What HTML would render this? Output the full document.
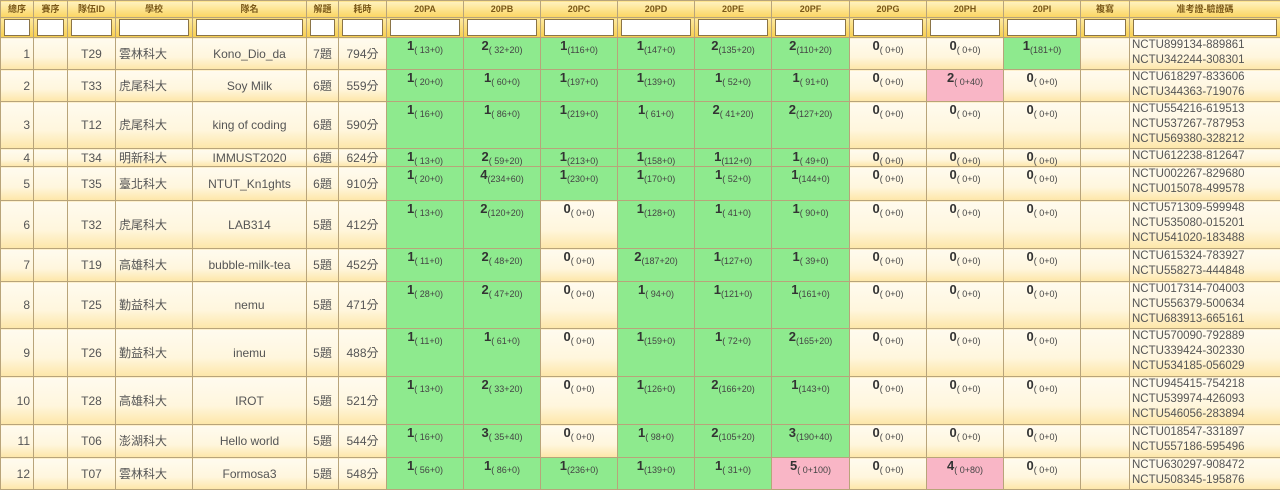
<!DOCTYPE html>
<html><head><meta charset="utf-8"><style>
*{box-sizing:border-box;margin:0;padding:0}
body{width:1280px;height:489px;overflow:hidden;background:#fff;font-family:"Liberation Sans","Noto Sans CJK TC",sans-serif}
table{border-collapse:collapse;table-layout:fixed;width:1280px}
td,th{border:1px solid #b8a47a;overflow:hidden;white-space:nowrap;line-height:14px}
th{background:linear-gradient(#fff2c0,#fbd560);font-size:9px;color:#7a5818;font-weight:bold;height:17px;text-align:center;vertical-align:middle;line-height:12px}
tr.f td{background:linear-gradient(#fde9a0,#f8cf50);height:20px;padding:1px 3px}
tr.f td div{background:#fff;border:1px solid #8a7448;height:17px}
tbody td{background:linear-gradient(#fffbef 0%,#fff6dd 60%,#fde6a8 100%);font-size:12px;color:#555;vertical-align:middle}
td.r{text-align:right;padding-right:3px}
td.c{text-align:center}
td.l{text-align:left;padding-left:3px}
td.p{text-align:center;vertical-align:top;padding-top:1px;color:#444}
td.g{background:#8eea8e}
td.k{background:#f9b6c6}
td.p b{font-size:13px;color:#333}
td.p i{font-style:normal;font-size:9px;position:relative;top:3px}
td.n{font-size:11.5px;line-height:15px;vertical-align:top;text-align:left;padding-left:2px;color:#555}
</style></head><body>
<table>
<colgroup><col style="width:33px"><col style="width:34px"><col style="width:48px"><col style="width:77px"><col style="width:114px"><col style="width:32px"><col style="width:48px"><col style="width:77px"><col style="width:77px"><col style="width:77px"><col style="width:77px"><col style="width:77px"><col style="width:78px"><col style="width:77px"><col style="width:77px"><col style="width:77px"><col style="width:49px"><col style="width:151px"></colgroup>
<thead><tr><th>總序</th><th>賽序</th><th>隊伍ID</th><th>學校</th><th>隊名</th><th>解題</th><th>耗時</th><th>20PA</th><th>20PB</th><th>20PC</th><th>20PD</th><th>20PE</th><th>20PF</th><th>20PG</th><th>20PH</th><th>20PI</th><th>複寫</th><th>准考證-驗證碼</th></tr>
<tr class="f"><td><div></div></td><td><div></div></td><td><div></div></td><td><div></div></td><td><div></div></td><td><div></div></td><td><div></div></td><td><div></div></td><td><div></div></td><td><div></div></td><td><div></div></td><td><div></div></td><td><div></div></td><td><div></div></td><td><div></div></td><td><div></div></td><td><div></div></td><td><div></div></td></tr></thead>
<tbody>
<tr style="height:32px"><td class="r">1</td><td></td><td class="c">T29</td><td class="l">雲林科大</td><td class="c">Kono_Dio_da</td><td class="c">7題</td><td class="c">794分</td><td class="p g"><b>1</b><i>( 13+0)</i></td><td class="p g"><b>2</b><i>( 32+20)</i></td><td class="p g"><b>1</b><i>(116+0)</i></td><td class="p g"><b>1</b><i>(147+0)</i></td><td class="p g"><b>2</b><i>(135+20)</i></td><td class="p g"><b>2</b><i>(110+20)</i></td><td class="p"><b>0</b><i>(  0+0)</i></td><td class="p"><b>0</b><i>(  0+0)</i></td><td class="p g"><b>1</b><i>(181+0)</i></td><td></td><td class="n">NCTU899134-889861<br>NCTU342244-308301</td></tr>
<tr style="height:32px"><td class="r">2</td><td></td><td class="c">T33</td><td class="l">虎尾科大</td><td class="c">Soy Milk</td><td class="c">6題</td><td class="c">559分</td><td class="p g"><b>1</b><i>( 20+0)</i></td><td class="p g"><b>1</b><i>( 60+0)</i></td><td class="p g"><b>1</b><i>(197+0)</i></td><td class="p g"><b>1</b><i>(139+0)</i></td><td class="p g"><b>1</b><i>( 52+0)</i></td><td class="p g"><b>1</b><i>( 91+0)</i></td><td class="p"><b>0</b><i>(  0+0)</i></td><td class="p k"><b>2</b><i>(  0+40)</i></td><td class="p"><b>0</b><i>(  0+0)</i></td><td></td><td class="n">NCTU618297-833606<br>NCTU344363-719076</td></tr>
<tr style="height:47px"><td class="r">3</td><td></td><td class="c">T12</td><td class="l">虎尾科大</td><td class="c">king of coding</td><td class="c">6題</td><td class="c">590分</td><td class="p g"><b>1</b><i>( 16+0)</i></td><td class="p g"><b>1</b><i>( 86+0)</i></td><td class="p g"><b>1</b><i>(219+0)</i></td><td class="p g"><b>1</b><i>( 61+0)</i></td><td class="p g"><b>2</b><i>( 41+20)</i></td><td class="p g"><b>2</b><i>(127+20)</i></td><td class="p"><b>0</b><i>(  0+0)</i></td><td class="p"><b>0</b><i>(  0+0)</i></td><td class="p"><b>0</b><i>(  0+0)</i></td><td></td><td class="n">NCTU554216-619513<br>NCTU537267-787953<br>NCTU569380-328212</td></tr>
<tr style="height:18px"><td class="r">4</td><td></td><td class="c">T34</td><td class="l">明新科大</td><td class="c">IMMUST2020</td><td class="c">6題</td><td class="c">624分</td><td class="p g"><b>1</b><i>( 13+0)</i></td><td class="p g"><b>2</b><i>( 59+20)</i></td><td class="p g"><b>1</b><i>(213+0)</i></td><td class="p g"><b>1</b><i>(158+0)</i></td><td class="p g"><b>1</b><i>(112+0)</i></td><td class="p g"><b>1</b><i>( 49+0)</i></td><td class="p"><b>0</b><i>(  0+0)</i></td><td class="p"><b>0</b><i>(  0+0)</i></td><td class="p"><b>0</b><i>(  0+0)</i></td><td></td><td class="n">NCTU612238-812647</td></tr>
<tr style="height:34px"><td class="r">5</td><td></td><td class="c">T35</td><td class="l">臺北科大</td><td class="c">NTUT_Kn1ghts</td><td class="c">6題</td><td class="c">910分</td><td class="p g"><b>1</b><i>( 20+0)</i></td><td class="p g"><b>4</b><i>(234+60)</i></td><td class="p g"><b>1</b><i>(230+0)</i></td><td class="p g"><b>1</b><i>(170+0)</i></td><td class="p g"><b>1</b><i>( 52+0)</i></td><td class="p g"><b>1</b><i>(144+0)</i></td><td class="p"><b>0</b><i>(  0+0)</i></td><td class="p"><b>0</b><i>(  0+0)</i></td><td class="p"><b>0</b><i>(  0+0)</i></td><td></td><td class="n">NCTU002267-829680<br>NCTU015078-499578</td></tr>
<tr style="height:48px"><td class="r">6</td><td></td><td class="c">T32</td><td class="l">虎尾科大</td><td class="c">LAB314</td><td class="c">5題</td><td class="c">412分</td><td class="p g"><b>1</b><i>( 13+0)</i></td><td class="p g"><b>2</b><i>(120+20)</i></td><td class="p"><b>0</b><i>(  0+0)</i></td><td class="p g"><b>1</b><i>(128+0)</i></td><td class="p g"><b>1</b><i>( 41+0)</i></td><td class="p g"><b>1</b><i>( 90+0)</i></td><td class="p"><b>0</b><i>(  0+0)</i></td><td class="p"><b>0</b><i>(  0+0)</i></td><td class="p"><b>0</b><i>(  0+0)</i></td><td></td><td class="n">NCTU571309-599948<br>NCTU535080-015201<br>NCTU541020-183488</td></tr>
<tr style="height:33px"><td class="r">7</td><td></td><td class="c">T19</td><td class="l">高雄科大</td><td class="c">bubble-milk-tea</td><td class="c">5題</td><td class="c">452分</td><td class="p g"><b>1</b><i>( 11+0)</i></td><td class="p g"><b>2</b><i>( 48+20)</i></td><td class="p"><b>0</b><i>(  0+0)</i></td><td class="p g"><b>2</b><i>(187+20)</i></td><td class="p g"><b>1</b><i>(127+0)</i></td><td class="p g"><b>1</b><i>( 39+0)</i></td><td class="p"><b>0</b><i>(  0+0)</i></td><td class="p"><b>0</b><i>(  0+0)</i></td><td class="p"><b>0</b><i>(  0+0)</i></td><td></td><td class="n">NCTU615324-783927<br>NCTU558273-444848</td></tr>
<tr style="height:47px"><td class="r">8</td><td></td><td class="c">T25</td><td class="l">勤益科大</td><td class="c">nemu</td><td class="c">5題</td><td class="c">471分</td><td class="p g"><b>1</b><i>( 28+0)</i></td><td class="p g"><b>2</b><i>( 47+20)</i></td><td class="p"><b>0</b><i>(  0+0)</i></td><td class="p g"><b>1</b><i>( 94+0)</i></td><td class="p g"><b>1</b><i>(121+0)</i></td><td class="p g"><b>1</b><i>(161+0)</i></td><td class="p"><b>0</b><i>(  0+0)</i></td><td class="p"><b>0</b><i>(  0+0)</i></td><td class="p"><b>0</b><i>(  0+0)</i></td><td></td><td class="n">NCTU017314-704003<br>NCTU556379-500634<br>NCTU683913-665161</td></tr>
<tr style="height:48px"><td class="r">9</td><td></td><td class="c">T26</td><td class="l">勤益科大</td><td class="c">inemu</td><td class="c">5題</td><td class="c">488分</td><td class="p g"><b>1</b><i>( 11+0)</i></td><td class="p g"><b>1</b><i>( 61+0)</i></td><td class="p"><b>0</b><i>(  0+0)</i></td><td class="p g"><b>1</b><i>(159+0)</i></td><td class="p g"><b>1</b><i>( 72+0)</i></td><td class="p g"><b>2</b><i>(165+20)</i></td><td class="p"><b>0</b><i>(  0+0)</i></td><td class="p"><b>0</b><i>(  0+0)</i></td><td class="p"><b>0</b><i>(  0+0)</i></td><td></td><td class="n">NCTU570090-792889<br>NCTU339424-302330<br>NCTU534185-056029</td></tr>
<tr style="height:48px"><td class="r">10</td><td></td><td class="c">T28</td><td class="l">高雄科大</td><td class="c">IROT</td><td class="c">5題</td><td class="c">521分</td><td class="p g"><b>1</b><i>( 13+0)</i></td><td class="p g"><b>2</b><i>( 33+20)</i></td><td class="p"><b>0</b><i>(  0+0)</i></td><td class="p g"><b>1</b><i>(126+0)</i></td><td class="p g"><b>2</b><i>(166+20)</i></td><td class="p g"><b>1</b><i>(143+0)</i></td><td class="p"><b>0</b><i>(  0+0)</i></td><td class="p"><b>0</b><i>(  0+0)</i></td><td class="p"><b>0</b><i>(  0+0)</i></td><td></td><td class="n">NCTU945415-754218<br>NCTU539974-426093<br>NCTU546056-283894</td></tr>
<tr style="height:33px"><td class="r">11</td><td></td><td class="c">T06</td><td class="l">澎湖科大</td><td class="c">Hello world</td><td class="c">5題</td><td class="c">544分</td><td class="p g"><b>1</b><i>( 16+0)</i></td><td class="p g"><b>3</b><i>( 35+40)</i></td><td class="p"><b>0</b><i>(  0+0)</i></td><td class="p g"><b>1</b><i>( 98+0)</i></td><td class="p g"><b>2</b><i>(105+20)</i></td><td class="p g"><b>3</b><i>(190+40)</i></td><td class="p"><b>0</b><i>(  0+0)</i></td><td class="p"><b>0</b><i>(  0+0)</i></td><td class="p"><b>0</b><i>(  0+0)</i></td><td></td><td class="n">NCTU018547-331897<br>NCTU557186-595496</td></tr>
<tr style="height:32px"><td class="r">12</td><td></td><td class="c">T07</td><td class="l">雲林科大</td><td class="c">Formosa3</td><td class="c">5題</td><td class="c">548分</td><td class="p g"><b>1</b><i>( 56+0)</i></td><td class="p g"><b>1</b><i>( 86+0)</i></td><td class="p g"><b>1</b><i>(236+0)</i></td><td class="p g"><b>1</b><i>(139+0)</i></td><td class="p g"><b>1</b><i>( 31+0)</i></td><td class="p k"><b>5</b><i>(  0+100)</i></td><td class="p"><b>0</b><i>(  0+0)</i></td><td class="p k"><b>4</b><i>(  0+80)</i></td><td class="p"><b>0</b><i>(  0+0)</i></td><td></td><td class="n">NCTU630297-908472<br>NCTU508345-195876</td></tr>
</tbody></table>
</body></html>
